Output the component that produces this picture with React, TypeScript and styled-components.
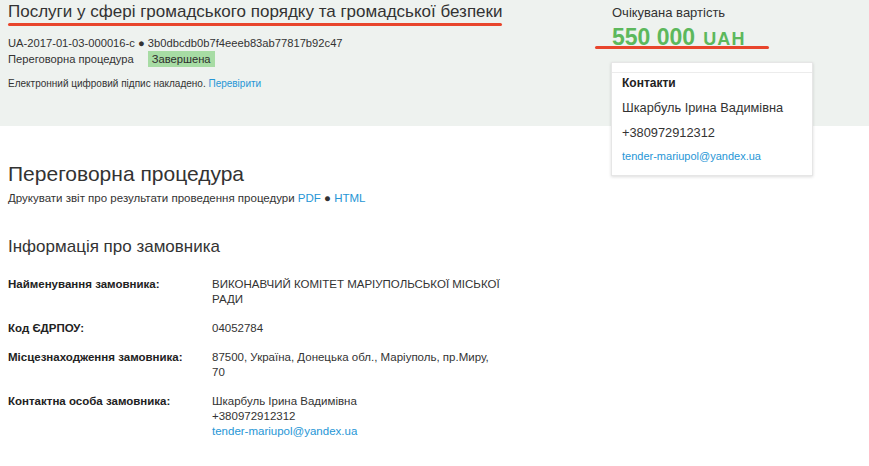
import React from "react";
import styled, { createGlobalStyle } from "styled-components";

const Global = createGlobalStyle`
  html, body { margin: 0; padding: 0; background: #fff; }
  body { font-family: "Liberation Sans", Arial, sans-serif; color: #333; }
  * { box-sizing: border-box; }
`;

const Page = styled.div`
  width: 869px;
  min-height: 466px;
  overflow: hidden;
`;

const Band = styled.header`
  height: 126px;
  background: #eef2ef;
  display: flex;
  justify-content: space-between;
  padding: 0 56px 0 8px;
`;

const HeadLeft = styled.div`
  display: flex;
  flex-direction: column;
`;

const Underlined = styled.div`
  position: relative;
  display: inline-block;
`;

const RedLine = styled.span<{ $l: number; $w: number; $t: number }>`
  position: absolute;
  left: ${(p) => p.$l}px;
  top: ${(p) => p.$t}px;
  width: ${(p) => p.$w}px;
  height: 3px;
  border-radius: 2px;
  background: #e8452c;
`;

const Title = styled.h1`
  margin: 0;
  padding-top: 1px;
  font-size: 17px;
  font-weight: 400;
  line-height: 21px;
  color: #333;
  white-space: nowrap;
`;

const Meta = styled.div`
  margin-top: 13px;
  font-size: 11.2px;
  line-height: 16px;
`;

const MetaRow = styled.div`
  display: flex;
  align-items: center;
  justify-content: flex-start;
  gap: 14px;
  font-size: 11.2px;
`;

const Badge = styled.span`
  background: #a7dca4;
  color: #2d2d2d;
  padding: 0 4px;
  line-height: 16px;
  font-size: 11.2px;
`;

const Sign = styled.div`
  margin-top: 10px;
  font-size: 10px;
  line-height: 14px;
`;

const Link = styled.a`
  color: #2696d6;
  text-decoration: none;
`;

const Side = styled.aside`
  width: 202px;
  display: flex;
  flex-direction: column;
  padding-top: 5px;
`;

const PriceLabel = styled.div`
  font-size: 13px;
  line-height: 16px;
  padding-left: 1px;
`;

const Price = styled.div`
  font-size: 23px;
  font-weight: 700;
  line-height: 24px;
  color: #5cb85c;
  padding-left: 1px;
  margin-top: 4px;
  display: flex;
  align-items: baseline;
  gap: 8px;
`;

const Unit = styled.span`
  font-size: 18px;
  letter-spacing: 1.2px;
`;

const Card = styled.div`
  margin-top: 11px;
  background: #fff;
  border: 1px solid #e6e6e6;
  box-shadow: 0 1px 3px rgba(0, 0, 0, 0.14);
  display: flex;
  flex-direction: column;
  position: relative;
  z-index: 1;
`;

const CardTop = styled.div`
  height: 10px;
  border-bottom: 1px solid #ececec;
`;

const CardBody = styled.div`
  padding: 2px 10px 10px;
  display: flex;
  flex-direction: column;
`;

const CardTitle = styled.div`
  font-size: 12px;
  font-weight: 700;
  line-height: 16px;
  color: #222;
`;

const CardLine = styled.div<{ $small?: boolean }>`
  margin-top: ${(p) => (p.$small ? 7 : 8)}px;
  font-size: ${(p) => (p.$small ? 11 : 12.8)}px;
  line-height: 17px;
`;

const Main = styled.main`
  padding: 35px 8px 0;
  width: 560px;
`;

const H2 = styled.h2`
  margin: 0;
  font-size: 21px;
  font-weight: 400;
  line-height: 26px;
  color: #333;
`;

const Print = styled.div`
  margin-top: 4px;
  font-size: 11.5px;
  line-height: 14px;
`;

const H3 = styled.h3`
  margin: 31px 0 0;
  font-size: 17px;
  font-weight: 400;
  line-height: 22px;
  color: #333;
`;

const Table = styled.div`
  margin-top: 19px;
  display: grid;
  grid-template-columns: 204px 292px;
  row-gap: 14px;
  font-size: 11.5px;
  line-height: 15px;
`;

const Label = styled.div`
  font-weight: 700;
  color: #222;
`;

const Value = styled.div`
  color: #333;
`;

export default function App() {
  return (
    <Page>
      <Global />
      <Band>
        <HeadLeft>
          <Underlined>
            <Title>Послуги у сфері громадського порядку та громадської безпеки</Title>
            <RedLine $l={0} $w={494} $t={23} />
          </Underlined>
          <Meta>
            <div>UA-2017-01-03-000016-c ● 3b0dbcdb0b7f4eeeb83ab77817b92c47</div>
            <MetaRow>
              <span>Переговорна процедура</span>
              <Badge>Завершена</Badge>
            </MetaRow>
          </Meta>
          <Sign>
            Електронний цифровий підпис накладено. <Link href="#">Перевірити</Link>
          </Sign>
        </HeadLeft>
        <Side>
          <PriceLabel>Очікувана вартість</PriceLabel>
          <Underlined>
            <Price>
              <span>550 000</span>
              <Unit>UAH</Unit>
            </Price>
            <RedLine $l={-16} $w={174} $t={25} />
          </Underlined>
          <Card>
            <CardTop />
            <CardBody>
              <CardTitle>Контакти</CardTitle>
              <CardLine>Шкарбуль Ірина Вадимівна</CardLine>
              <CardLine>+380972912312</CardLine>
              <CardLine $small>
                <Link href="#">tender-mariupol@yandex.ua</Link>
              </CardLine>
            </CardBody>
          </Card>
        </Side>
      </Band>
      <Main>
        <H2>Переговорна процедура</H2>
        <Print>
          Друкувати звіт про результати проведення процедури <Link href="#">PDF</Link> ●{" "}
          <Link href="#">HTML</Link>
        </Print>
        <H3>Інформація про замовника</H3>
        <Table>
          <Label>Найменування замовника:</Label>
          <Value>ВИКОНАВЧИЙ КОМІТЕТ МАРІУПОЛЬСЬКОЇ МІСЬКОЇ РАДИ</Value>
          <Label>Код ЄДРПОУ:</Label>
          <Value>04052784</Value>
          <Label>Місцезнаходження замовника:</Label>
          <Value>87500, Україна, Донецька обл., Маріуполь, пр.Миру, 70</Value>
          <Label>Контактна особа замовника:</Label>
          <Value>
            Шкарбуль Ірина Вадимівна
            <br />
            +380972912312
            <br />
            <Link href="#">tender-mariupol@yandex.ua</Link>
          </Value>
        </Table>
      </Main>
    </Page>
  );
}
